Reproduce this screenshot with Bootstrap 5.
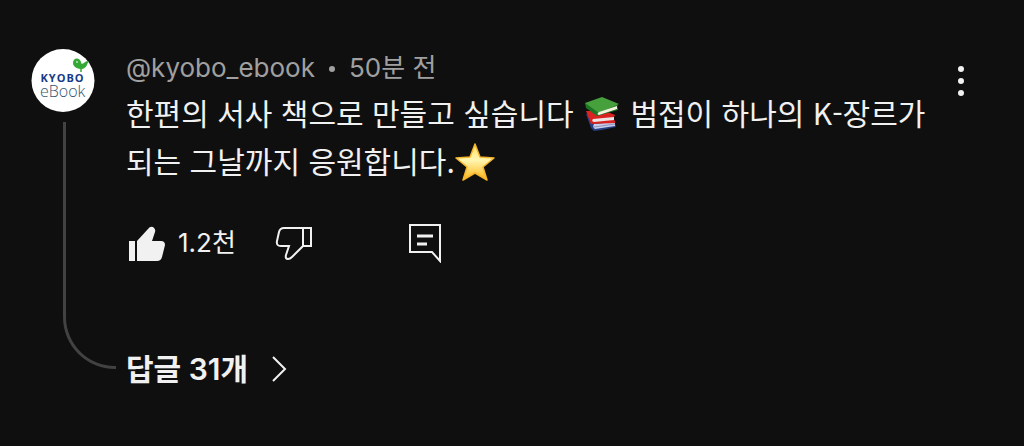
<!DOCTYPE html>
<html lang="ko">
<head>
<meta charset="utf-8">
<meta name="viewport" content="width=device-width, initial-scale=1">
<title>댓글</title>
<link href="https://cdn.jsdelivr.net/npm/bootstrap@5.3.0/dist/css/bootstrap.min.css" rel="stylesheet">
<style>
  body { background: #0f0f0f; color: #f1f1f1; font-family: Inter, "Noto Sans CJK KR", sans-serif; }
  .comment { padding: 48px 47px 0 31px; }
  .rail { width: 95px; }
  .avatar { width: 64px; height: 64px; }
  .thread { width: 53px; margin: 10px 0 24px 32px; border: solid #424242; border-width: 0 0 3px 3px; border-bottom-left-radius: 52px; }
  .meta { font-size: 26px; line-height: 40px; color: #a0a0a0; }
  .meta a { color: inherit; }
  .dot { width: 6px; height: 6px; margin: 2px 14px 0; border-radius: 50%; background: #a0a0a0; }
  .message { font-family: "Noto Sans CJK KR", sans-serif; font-size: 30px; line-height: 48px; word-break: keep-all; }
  .emoji { width: 40px; height: 40px; vertical-align: -9px; }
  .tool { color: inherit; background: none; border: 0; padding: 0; }
  .actions { height: 48px; margin-top: 35px; }
  .count { font-size: 26px; line-height: 40px; margin-left: 12px; }
  .dislike { margin-left: 38px; }
  .reply { margin-left: 91px; }
  .replies { font-size: 30px; line-height: 48px; font-weight: 600; margin-top: 78px; }
  .chevron { margin-left: 20px; }
  .more { margin-top: 17px; }
</style>
</head>
<body>
<article class="comment d-flex">
  <div class="rail d-flex flex-column flex-shrink-0">
    <svg class="avatar" viewBox="0 0 64 64" role="img" aria-label="KYOBO eBook">
      <circle cx="32" cy="32.5" r="31.5" fill="#fff"/>
      <path d="M42 15c0-3 2-5 4.500-4.500s3.500 3 3.500 4c0 1.500 1.500 1.500 3 .500 1-1.500 3-2 5-1.500-1 1-1.500 2-2 3.500-1.500 3-4 4.500-6.500 4-4.500-.500-7.500-3-7.500-6z" fill="#35a936"/>
      <path d="M50 20v4" stroke="#35a936" stroke-width="1.5"/>
      <circle cx="46" cy="14" r="1" fill="#bce4b8"/>
      <text x="9.500" y="34" font-family="Open Sans, sans-serif" font-weight="700" font-size="11" letter-spacing="1" fill="#173a86">KYOBO</text>
      <text x="9" y="49" font-family="Open Sans, sans-serif" font-weight="300" font-size="16" fill="#34546f">eBook</text>
    </svg>
    <div class="thread flex-grow-1"></div>
  </div>
  <div class="flex-grow-1">
    <div class="meta d-flex align-items-center"><a href="#" class="text-decoration-none">@kyobo_ebook</a><span class="dot"></span><time>50분 전</time></div>
    <p class="message mb-0">한편의 서사 책으로 만들고 싶습니다
      <svg class="emoji" viewBox="0 0 40 40" role="img" aria-label="책">
        <path d="M4 20l5 14 3 3q10-1 22-4l-2-8z" fill="#263e83"/>
        <path d="M12 30l21-2v4l-20 3q-3-2-1-5z" fill="#c9cdea"/><path d="M12 33l21-3" stroke="#8c91bd"/>
        <path d="M4 17l5 13 24-1v-2l-1-1v-3l1-2-10-4z" fill="#d92320"/>
        <path d="M11 25l21-2v3l-20 2q-3-1-1-3z" fill="#eee5e5"/>
        <path d="M3 9l1 5 11 8 21-6v-2l-1-1 1-2z" fill="#1d7423"/>
        <path d="M3 9L20 3l17 7-20 9z" fill="#46a03c"/>
        <path d="M17 18l18-6v3l-18 6q-3-1 0-3z" fill="#f1f3df"/>
      </svg>
      범접이 하나의 K-장르가 되는 그날까지 응원합니다.<svg class="emoji" viewBox="0 0 40 40" role="img" aria-label="별">
        <defs><linearGradient id="gold" x2="0" y2="1"><stop stop-color="#ffe260"/><stop offset=".45" stop-color="#fff6b0"/><stop offset="1" stop-color="#fdb515"/></linearGradient></defs>
        <path d="M20 2l5 13 14 1-11 9 4 13-12-7-12 7 4-13L1 16l14-1z" fill="url(#gold)" stroke="#f4b52c" stroke-width="1.500" stroke-linejoin="round"/>
      </svg></p>
    <div class="actions d-flex align-items-center">
      <button class="tool d-flex align-items-center" type="button" aria-label="좋아요">
        <svg width="40" height="40" viewBox="0 0 40 40" fill="#f1f1f1"><path d="M3 18h6v20H3zM11 18L22 6q2-3 5-2 3 2 2 5l-3 9h9q4 0 4 4l-3 12q-1 4-5 4H11z"/></svg>
        <span class="count">1.2천</span>
      </button>
      <button class="tool dislike" type="button" aria-label="싫어요">
        <svg class="d-block" width="40" height="40" viewBox="0 0 40 40" fill="none" stroke="#f1f1f1" stroke-width="2"><path d="M29 5H10q-4 0-5 4L3 18q-1 5 4 5h8l-3 9q-1 4 2 4 2 0 4-2l11-11zM29 5h8v18h-8"/></svg>
      </button>
      <button class="tool reply" type="button" aria-label="답글">
        <svg class="d-block" width="40" height="40" viewBox="0 0 40 40" fill="none" stroke="#f1f1f1" stroke-width="2"><path d="M5 2h30v36l-8-9H5z"/><path d="M12 13h16M12 21h10" stroke-width="3"/></svg>
      </button>
    </div>
    <a href="#" class="replies d-inline-flex align-items-center text-reset text-decoration-none">답글 31개
      <svg class="chevron" width="24" height="32" viewBox="0 0 24 32" fill="none" stroke="#f1f1f1" stroke-width="2"><path d="M5 4l12 12L5 28"/></svg>
    </a>
  </div>
  <button class="tool more align-self-start flex-shrink-0" type="button" aria-label="더보기">
    <svg class="d-block" width="32" height="32" viewBox="0 0 32 32" fill="#f1f1f1"><circle cx="16" cy="4" r="3"/><circle cx="16" cy="16" r="3"/><circle cx="16" cy="28" r="3"/></svg>
  </button>
</article>
<script src="https://cdn.jsdelivr.net/npm/bootstrap@5.3.0/dist/js/bootstrap.bundle.min.js"></script>
</body>
</html>
